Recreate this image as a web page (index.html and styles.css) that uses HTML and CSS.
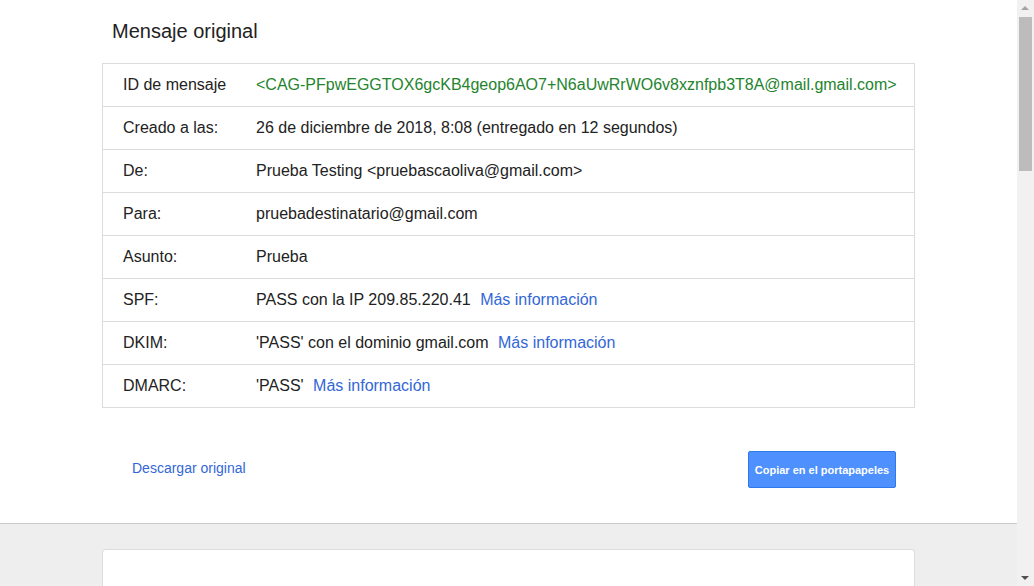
FILE: index.html
```html
<!DOCTYPE html>
<html lang="es">
<head>
<meta charset="utf-8">
<title>Mensaje original</title>
<link rel="stylesheet" href="styles.css">
</head>
<body>
<div class="viewport">
  <div class="page">
    <section class="top">
      <div class="container">
        <h1 class="title">Mensaje original</h1>
        <div class="details">
          <div class="row"><div class="label">ID de mensaje</div><div class="value msgid">&lt;CAG-PFpwEGGTOX6gcKB4geop6AO7+N6aUwRrWO6v8xznfpb3T8A@mail.gmail.com&gt;</div></div>
          <div class="row"><div class="label">Creado a las:</div><div class="value">26 de diciembre de 2018, 8:08 (entregado en 12 segundos)</div></div>
          <div class="row"><div class="label">De:</div><div class="value">Prueba Testing &lt;pruebascaoliva@gmail.com&gt;</div></div>
          <div class="row"><div class="label">Para:</div><div class="value">pruebadestinatario@gmail.com</div></div>
          <div class="row"><div class="label">Asunto:</div><div class="value">Prueba</div></div>
          <div class="row"><div class="label">SPF:</div><div class="value">PASS con la IP 209.85.220.41 <a class="link" href="#">Más información</a></div></div>
          <div class="row"><div class="label">DKIM:</div><div class="value">'PASS' con el dominio gmail.com <a class="link" href="#">Más información</a></div></div>
          <div class="row"><div class="label">DMARC:</div><div class="value">'PASS' <a class="link" href="#">Más información</a></div></div>
        </div>
        <div class="actions">
          <a class="download" href="#">Descargar original</a>
          <button class="copy" type="button">Copiar en el portapapeles</button>
        </div>
      </div>
    </section>
    <section class="bottom">
      <div class="container">
        <div class="card"></div>
      </div>
    </section>
  </div>
  <div class="scrollbar">
    <div class="arrow up"></div>
    <div class="track"><div class="thumb"></div></div>
    <div class="arrow down"></div>
  </div>
</div>
</body>
</html>
```

FILE: styles.css
```css
html, body {
  margin: 0;
  padding: 0;
  height: 100%;
  overflow: hidden;
}

body {
  font-family: "Liberation Sans", Arial, sans-serif;
  color: #222;
  background: #fff;
}

.viewport {
  display: flex;
  height: 586px;
  overflow: hidden;
}

.page {
  flex: 1;
  display: flex;
  flex-direction: column;
  min-width: 0;
}

.container {
  width: 813px;
  margin: 0 auto;
}

.top {
  background: #fff;
  border-bottom: 1px solid #cbcbcb;
}

.title {
  margin: 0 0 20px 10px;
  padding-top: 19px;
  font-size: 20px;
  line-height: 24px;
  font-weight: normal;
  color: #222;
}

.details {
  border: 1px solid #dcdcdc;
}

.row {
  display: grid;
  grid-template-columns: 153px 1fr;
  border-top: 1px solid #dcdcdc;
  font-size: 16px;
  line-height: 18px;
}

.row:first-child {
  border-top: none;
}

.label {
  padding: 12px 0 12px 20px;
}

.value {
  padding: 12px 0;
  white-space: nowrap;
}

.msgid {
  color: #24842e;
}

.link {
  color: #3367d6;
  text-decoration: none;
  margin-left: 5px;
}

.actions {
  display: flex;
  align-items: center;
  justify-content: space-between;
  padding: 43px 19px 35px 30px;
}

.download {
  color: #3367d6;
  text-decoration: none;
  font-size: 14px;
  margin-bottom: 4px;
}

.copy {
  width: 148px;
  height: 37px;
  padding: 0;
  background: #4d90fe;
  border: 1px solid #3079ed;
  border-radius: 2px;
  color: #fff;
  font-family: "Liberation Sans", Arial, sans-serif;
  font-weight: bold;
  font-size: 11px;
}

.bottom {
  flex: 1;
  background: #eeeeee;
  padding-top: 25px;
}

.card {
  height: 60px;
  background: #fff;
  border: 1px solid #dddddd;
  border-bottom: none;
  border-radius: 4px 4px 0 0;
}

.scrollbar {
  width: 17px;
  flex: none;
  background: #f1f1f1;
  display: flex;
  flex-direction: column;
}

.arrow {
  height: 17px;
  position: relative;
}

.arrow::after {
  content: "";
  position: absolute;
  left: 4px;
  width: 0;
  height: 0;
  border-left: 4px solid transparent;
  border-right: 4px solid transparent;
}

.arrow.up::after {
  top: 6px;
  border-bottom: 4px solid #a3a3a3;
}

.arrow.down::after {
  top: 7px;
  border-top: 4px solid #505050;
}

.track {
  flex: 1;
  padding: 0 2px;
}

.thumb {
  height: 154px;
  background: #bcbcbc;
}
```
